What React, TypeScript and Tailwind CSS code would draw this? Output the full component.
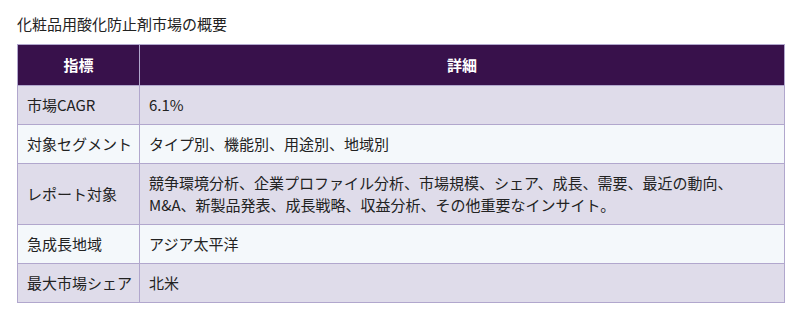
const rows: [string, string][] = [
  ["市場CAGR", "6.1%"],
  ["対象セグメント", "タイプ別、機能別、用途別、地域別"],
  [
    "レポート対象",
    "競争環境分析、企業プロファイル分析、市場規模、シェア、成長、需要、最近の動向、M&A、新製品発表、成長戦略、収益分析、その他重要なインサイト。",
  ],
  ["急成長地域", "アジア太平洋"],
  ["最大市場シェア", "北米"],
];

export default function App() {
  return (
    <div
      className="w-[796px] h-[310px] bg-white pl-[17px] pt-[13px] text-[#222] text-[15px] leading-[22px]"
      style={{ fontFamily: '"Noto Sans CJK JP", "Noto Sans", sans-serif' }}
    >
      <h2 className="mb-[9px] font-normal">化粧品用酸化防止剤市場の概要</h2>
      <table className="w-[768px] border-collapse border border-[#b1a7cd]">
        <thead>
          <tr className="bg-[#38114b] text-white h-[41px]">
            <th className="w-[122px] border border-[#b1a7cd] font-bold">指標</th>
            <th className="border border-[#b1a7cd] font-bold">詳細</th>
          </tr>
        </thead>
        <tbody>
          {rows.map(([k, v], i) => (
            <tr key={k} className={i % 2 === 0 ? "bg-[#dfdcea]" : "bg-[#f4f8fb]"}>
              <td className="border border-[#b1a7cd] pl-[9px] pr-[4px] py-[8px] whitespace-nowrap">{k}</td>
              <td className="border border-[#b1a7cd] pl-[9px] pr-[40px] py-[8px]">{v}</td>
            </tr>
          ))}
        </tbody>
      </table>
    </div>
  );
}
